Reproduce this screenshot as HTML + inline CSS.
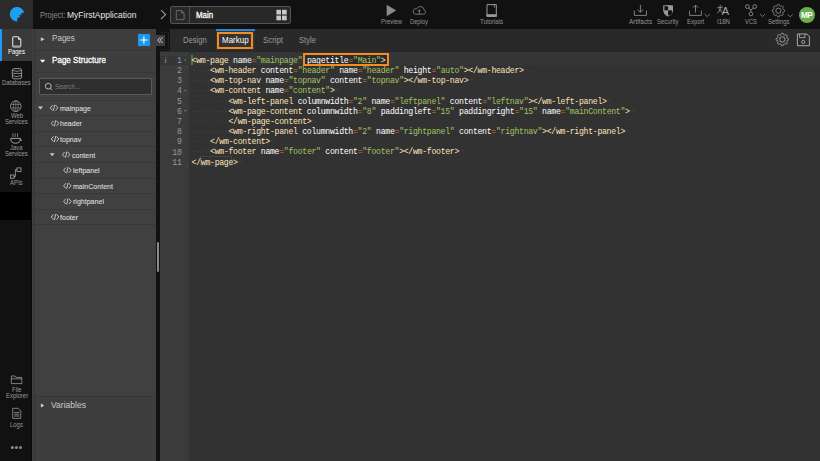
<!DOCTYPE html>
<html><head><meta charset="utf-8">
<style>
*{box-sizing:border-box}
html,body{margin:0;padding:0}
body{width:820px;height:461px;overflow:hidden;position:relative;background:#323232;font-family:"Liberation Sans",sans-serif}
.a{position:absolute}
.t{position:absolute;white-space:nowrap;line-height:1}
#code{position:absolute;left:191.6px;top:55.8px;font-family:"Liberation Mono",monospace;font-size:8.2px;letter-spacing:-0.303px;line-height:10.2px;color:#fff;white-space:pre}
#code div{height:10.2px}
.g{color:#FFE5BB}.s{color:#A5C261}.o{color:#CC7833}.i{color:#474747}.e{color:#424242}
#gut{position:absolute;left:160px;top:55.8px;width:21.6px;font-family:"Liberation Mono",monospace;font-size:8.2px;letter-spacing:-0.303px;line-height:10.2px;color:#999;text-align:right;white-space:pre}
.row{position:absolute;left:35px;width:121px;height:15.6px;border-top:1px solid #383838}
.tr{position:absolute;font-size:7.1px;color:#d2d2d2;line-height:1;white-space:nowrap}
.lbl{position:absolute;font-size:6.2px;color:#959595;line-height:1;white-space:nowrap}
.sl{position:absolute;font-size:6px;color:#9a9a9a;line-height:1.0;white-space:nowrap;text-align:center;width:33.4px;left:0}
</style></head><body>
<div class="a" style="left:0;top:0;width:820px;height:29px;background:#111"></div>
<div class="a" style="left:0;top:0;width:33px;height:29px;background:#2b2b2b"></div>
<div class="a" style="left:0;top:29px;width:31px;height:432px;background:#111"></div>
<div class="a" style="left:0;top:192px;width:31px;height:28px;background:#000"></div>
<div class="a" style="left:31px;top:29px;width:1px;height:432px;background:#0a0a0a"></div>
<div class="a" style="left:0;top:29px;width:33px;height:32px;background:#3a3a3a"></div>
<div class="a" style="left:0;top:29px;width:2px;height:32px;background:#1b9af7"></div>
<div class="a" style="left:32px;top:29px;width:124px;height:432px;background:#3e3e3e"></div>
<div class="a" style="left:34px;top:29px;width:1px;height:432px;background:#363636"></div>
<div class="a" style="left:35px;top:50px;width:121px;height:1px;background:#363636"></div>
<div class="a" style="left:35px;top:72px;width:121px;height:1px;background:#363636"></div>
<div class="a" style="left:35px;top:99px;width:121px;height:297px;background:#404040"></div>
<div class="a" style="left:35px;top:395.5px;width:121px;height:1px;background:#373737"></div>
<div class="a" style="left:35px;top:416.5px;width:121px;height:1px;background:#3a3a3a"></div>
<div class="a" style="left:137.6px;top:33.7px;width:12.4px;height:12.5px;background:#1d96ef"></div>
<div class="a" style="left:39.4px;top:78.2px;width:112.6px;height:16.6px;border:1px solid #5a5a5a;background:#2e2e2e;border-radius:1px"></div>
<div class="row" style="top:99.60px"></div><div class="row" style="top:115.20px"></div><div class="row" style="top:130.80px"></div><div class="row" style="top:146.40px"></div><div class="row" style="top:162.00px"></div><div class="row" style="top:177.60px"></div><div class="row" style="top:193.20px"></div><div class="row" style="top:208.80px"></div><div class="row" style="top:224.40px;height:1px"></div>
<div class="a" style="left:156px;top:29px;width:4px;height:432px;background:#121212"></div>
<div class="a" style="left:156.8px;top:241.7px;width:2.6px;height:30.6px;background:#8a8a8a;border-radius:1.3px"></div>
<div class="a" style="left:160px;top:29px;width:660px;height:22.5px;background:#292929"></div>
<div class="a" style="left:216px;top:29px;width:39px;height:21px;background:#333"></div>
<div class="a" style="left:216px;top:29px;width:39px;height:2px;background:#2b87d1"></div>
<div class="a" style="left:216.5px;top:31.9px;width:36.8px;height:17.2px;border:2.2px solid #f68b1f"></div>
<div class="a" style="left:156px;top:29px;width:14px;height:22px;background:#131313"></div>
<div class="a" style="left:160.5px;top:32px;width:8px;height:17.5px;border:1px dotted #272727;border-left:none"></div>
<div class="a" style="left:156px;top:35.1px;width:9px;height:10.7px;background:#3d3d3d"></div>
<div class="a" style="left:160px;top:51.5px;width:29px;height:410px;background:#3b3b3b"></div>
<div class="a" style="left:160px;top:55.5px;width:29px;height:9.4px;background:#353637"></div>
<div class="a" style="left:189px;top:51.5px;width:631px;height:13.5px;background:#353637"></div>
<div class="a" style="left:191px;top:54.8px;width:1.6px;height:9.8px;background:#4f7a2c"></div>
<div class="a" style="left:302.9px;top:53px;width:86.6px;height:13.1px;background:#2c2c2c"></div>
<div class="a" style="left:200.3px;top:156.3px;width:32px;height:10px;border:1px solid #424242"></div>
<div id="gut">1
2
3
4
5
6
7
8
9
10
11</div>
<div id="code"><div><span class="g">&lt;wm-page</span> name<span class="o">=</span><span class="s">"mainpage"</span> pagetitle<span class="o">=</span><span class="s">"Main"</span><span class="g">&gt;</span><span class="e">¬</span></div><div><span class="i">····</span><span class="g">&lt;wm-header</span> content<span class="o">=</span><span class="s">"header"</span> name<span class="o">=</span><span class="s">"header"</span> height<span class="o">=</span><span class="s">"auto"</span><span class="g">&gt;&lt;/wm-header&gt;</span><span class="e">¬</span></div><div><span class="i">····</span><span class="g">&lt;wm-top-nav</span> name<span class="o">=</span><span class="s">"topnav"</span> content<span class="o">=</span><span class="s">"topnav"</span><span class="g">&gt;&lt;/wm-top-nav&gt;</span><span class="e">¬</span></div><div><span class="i">····</span><span class="g">&lt;wm-content</span> name<span class="o">=</span><span class="s">"content"</span><span class="g">&gt;</span><span class="e">¬</span></div><div><span class="i">········</span><span class="g">&lt;wm-left-panel</span> columnwidth<span class="o">=</span><span class="s">"2"</span> name<span class="o">=</span><span class="s">"leftpanel"</span> content<span class="o">=</span><span class="s">"leftnav"</span><span class="g">&gt;&lt;/wm-left-panel&gt;</span><span class="e">¬</span></div><div><span class="i">········</span><span class="g">&lt;wm-page-content</span> columnwidth<span class="o">=</span><span class="s">"8"</span> paddingleft<span class="o">=</span><span class="s">"15"</span> paddingright<span class="o">=</span><span class="s">"15"</span> name<span class="o">=</span><span class="s">"mainContent"</span><span class="g">&gt;</span><span class="e">¬</span></div><div><span class="i">········</span><span class="g">&lt;/wm-page-content&gt;</span><span class="e">¬</span></div><div><span class="i">········</span><span class="g">&lt;wm-right-panel</span> columnwidth<span class="o">=</span><span class="s">"2"</span> name<span class="o">=</span><span class="s">"rightpanel"</span> content<span class="o">=</span><span class="s">"rightnav"</span><span class="g">&gt;&lt;/wm-right-panel&gt;</span><span class="e">¬</span></div><div><span class="i">····</span><span class="g">&lt;/wm-content&gt;</span><span class="e">¬</span></div><div><span class="i">····</span><span class="g">&lt;wm-footer</span> name<span class="o">=</span><span class="s">"footer"</span> content<span class="o">=</span><span class="s">"footer"</span><span class="g">&gt;&lt;/wm-footer&gt;</span><span class="e">¬</span></div><div><span class="g">&lt;/wm-page&gt;</span><span class="e">¬</span></div></div>
<div class="a" style="left:302.9px;top:53px;width:86.6px;height:13.1px;border:2.1px solid #f68b1f"></div>
<div class="a" style="left:170.2px;top:6px;width:120.8px;height:17.8px;border:1px solid #555;border-radius:2px;background:#282828"></div>
<div class="a" style="left:189.2px;top:6.5px;width:1px;height:17px;background:#505050"></div>
<div class="a" style="left:798.55px;top:6.7px;width:16.1px;height:16.1px;border-radius:50%;background:#6aae4c"></div>
<div class="t" style="left:800.9px;top:11.9px;font-size:8.2px;color:#fff;font-weight:bold;letter-spacing:-0.4px">MP</div>
<div class="t" style="left:40.00px;top:10.91px;font-size:8.53px;color:#8a8a8a;transform:scaleX(0.8850);transform-origin:0 0;">Project:</div>
<div class="t" style="left:66.70px;top:10.51px;font-size:9.01px;color:#e6e6e6;transform:scaleX(0.9434);transform-origin:0 0;">MyFirstApplication</div>
<div class="t" style="left:195.90px;top:10.79px;font-size:9.07px;color:#fff;transform:scaleX(0.8696);transform-origin:0 0;-webkit-text-stroke:0.30px #fff;">Main</div>
<div class="t" style="left:183.20px;top:36.05px;font-size:8.41px;color:#9a9a9a;transform:scaleX(0.9091);transform-origin:0 0;">Design</div>
<div class="t" style="left:221.60px;top:35.74px;font-size:8.77px;color:#fff;transform:scaleX(0.9091);transform-origin:0 0;">Markup</div>
<div class="t" style="left:263.20px;top:35.85px;font-size:8.65px;color:#9a9a9a;transform:scaleX(0.9091);transform-origin:0 0;">Script</div>
<div class="t" style="left:298.50px;top:36.05px;font-size:8.41px;color:#9a9a9a;transform:scaleX(0.9091);transform-origin:0 0;">Style</div>
<div class="t" style="left:51.60px;top:34.41px;font-size:9.05px;color:#c8c8c8;transform:scaleX(0.8929);transform-origin:0 0;">Pages</div>
<div class="t" style="left:51.90px;top:55.72px;font-size:9.15px;color:#fff;transform:scaleX(0.8850);transform-origin:0 0;-webkit-text-stroke:0.30px #fff;">Page Structure</div>
<div class="t" style="left:51.10px;top:400.02px;font-size:9.86px;color:#c8c8c8;transform:scaleX(0.8696);transform-origin:0 0;">Variables</div>
<div class="t" style="left:54.75px;top:83.74px;font-size:7.13px;color:#7a7a7a;transform:scaleX(0.8850);transform-origin:0 0;">Search...</div>
<div class="t" style="left:59.90px;top:104.83px;font-size:7.61px;color:#dadada;transform:scaleX(0.9259);transform-origin:0 0;-webkit-text-stroke:0.12px #dadada;">mainpage</div>
<div class="t" style="left:60.40px;top:120.43px;font-size:7.61px;color:#dadada;transform:scaleX(0.9259);transform-origin:0 0;-webkit-text-stroke:0.12px #dadada;">header</div>
<div class="t" style="left:60.40px;top:136.03px;font-size:7.61px;color:#dadada;transform:scaleX(0.9259);transform-origin:0 0;-webkit-text-stroke:0.12px #dadada;">topnav</div>
<div class="t" style="left:71.50px;top:151.63px;font-size:7.61px;color:#dadada;transform:scaleX(0.9259);transform-origin:0 0;-webkit-text-stroke:0.12px #dadada;">content</div>
<div class="t" style="left:72.60px;top:167.23px;font-size:7.61px;color:#dadada;transform:scaleX(0.9259);transform-origin:0 0;-webkit-text-stroke:0.12px #dadada;">leftpanel</div>
<div class="t" style="left:72.60px;top:182.83px;font-size:7.61px;color:#dadada;transform:scaleX(0.9259);transform-origin:0 0;-webkit-text-stroke:0.12px #dadada;">mainContent</div>
<div class="t" style="left:72.60px;top:198.43px;font-size:7.61px;color:#dadada;transform:scaleX(0.9259);transform-origin:0 0;-webkit-text-stroke:0.12px #dadada;">rightpanel</div>
<div class="t" style="left:60.40px;top:214.03px;font-size:7.61px;color:#dadada;transform:scaleX(0.9259);transform-origin:0 0;-webkit-text-stroke:0.12px #dadada;">footer</div>
<div class="t" style="left:380.90px;top:19.01px;font-size:6.70px;color:#959595;transform:scaleX(0.8850);transform-origin:0 0;">Preview</div>
<div class="t" style="left:410.00px;top:18.60px;font-size:6.53px;color:#959595;transform:scaleX(0.8850);transform-origin:0 0;">Deploy</div>
<div class="t" style="left:480.00px;top:18.83px;font-size:6.90px;color:#959595;transform:scaleX(0.8850);transform-origin:0 0;">Tutorials</div>
<div class="t" style="left:628.80px;top:18.01px;font-size:7.23px;color:#959595;transform:scaleX(0.8850);transform-origin:0 0;">Artifacts</div>
<div class="t" style="left:657.40px;top:19.01px;font-size:6.69px;color:#959595;transform:scaleX(0.8850);transform-origin:0 0;">Security</div>
<div class="t" style="left:687.00px;top:18.95px;font-size:6.76px;color:#959595;transform:scaleX(0.8850);transform-origin:0 0;">Export</div>
<div class="t" style="left:716.90px;top:18.19px;font-size:7.01px;color:#959595;transform:scaleX(0.8850);transform-origin:0 0;">I18N</div>
<div class="t" style="left:745.00px;top:18.54px;font-size:6.60px;color:#959595;transform:scaleX(0.8850);transform-origin:0 0;">VCS</div>
<div class="t" style="left:768.00px;top:18.98px;font-size:6.72px;color:#959595;transform:scaleX(0.8850);transform-origin:0 0;">Settings</div>
<div class="t" style="left:8.27px;top:48.89px;font-size:6.72px;color:#fff;transform:scaleX(0.8850);transform-origin:0 0;">Pages</div>
<div class="t" style="left:2.48px;top:80.29px;font-size:6.72px;color:#9a9a9a;transform:scaleX(0.8850);transform-origin:0 0;">Databases</div>
<div class="t" style="left:10.64px;top:112.79px;font-size:6.72px;color:#9a9a9a;transform:scaleX(0.8850);transform-origin:0 0;">Web</div>
<div class="t" style="left:5.29px;top:119.09px;font-size:6.72px;color:#9a9a9a;transform:scaleX(0.8850);transform-origin:0 0;">Services</div>
<div class="t" style="left:10.41px;top:144.79px;font-size:6.72px;color:#9a9a9a;transform:scaleX(0.8850);transform-origin:0 0;">Java</div>
<div class="t" style="left:5.29px;top:151.09px;font-size:6.72px;color:#9a9a9a;transform:scaleX(0.8850);transform-origin:0 0;">Services</div>
<div class="t" style="left:10.42px;top:180.09px;font-size:6.72px;color:#9a9a9a;transform:scaleX(0.8850);transform-origin:0 0;">APIs</div>
<div class="t" style="left:11.91px;top:386.69px;font-size:6.72px;color:#9a9a9a;transform:scaleX(0.8850);transform-origin:0 0;">File</div>
<div class="t" style="left:5.62px;top:392.69px;font-size:6.72px;color:#9a9a9a;transform:scaleX(0.8850);transform-origin:0 0;">Explorer</div>
<div class="t" style="left:10.25px;top:422.19px;font-size:6.72px;color:#9a9a9a;transform:scaleX(0.8850);transform-origin:0 0;">Logs</div>
<svg class="a" style="left:0;top:0" width="820" height="461" viewBox="0 0 820 461">
 <defs><clipPath id="sh"><path d="M663.2,5.6 Q668.1,4.2 673,5.6 V10 Q673,14.6 668.1,16.5 Q663.2,14.6 663.2,10 Z"/></clipPath></defs>
 <path d="M24.1,12.7 A7.25,7.25 0 1 0 17.2,21.4 L17.3,18 L20.2,16.9 L19,15.4 L22,14.5 L20.7,13.2 Z" fill="#1e9ef0"/>
 <!-- plus -->
 <path d="M143.9,36.4 V43.5 M140.2,40 H147.6" stroke="#fff" stroke-width="1.15"/>
 <!-- collapse << -->
 <path d="M160.2,37.4 L157.7,40.2 L160.2,43 M162.6,37.4 L160.1,40.2 L162.6,43" stroke="#d8d8d8" stroke-width="0.9" fill="none"/>
 <!-- panel triangles -->
 <path d="M40.8,37.3 L44.6,39.3 L40.8,41.3 Z" fill="#c8c8c8"/>
 <path d="M40,59.8 L45.2,59.8 L42.6,62.7 Z" fill="#fff"/>
 <path d="M40.9,403.4 L44.3,405.5 L40.9,407.6 Z" fill="#d0d0d0"/>
 <!-- search icon -->
 <circle cx="48.3" cy="86.2" r="2.9" stroke="#c8c8c8" stroke-width="0.9" fill="none"/>
 <path d="M50.4,88.3 L52.2,90" stroke="#c8c8c8" stroke-width="0.9"/>
 <path d="M52.50,105.20 L50.30,107.80 L52.50,110.40 M55.60,105.20 L57.80,107.80 L55.60,110.40 M54.70,104.80 L53.40,110.80" stroke="#d0d0d0" stroke-width="0.9" fill="none"/><path d="M38.00,106.40 L43.00,106.40 L40.50,109.40 Z" fill="#c8c8c8"/><path d="M53.50,120.80 L51.30,123.40 L53.50,126.00 M56.60,120.80 L58.80,123.40 L56.60,126.00 M55.70,120.40 L54.40,126.40" stroke="#d0d0d0" stroke-width="0.9" fill="none"/><path d="M53.50,136.40 L51.30,139.00 L53.50,141.60 M56.60,136.40 L58.80,139.00 L56.60,141.60 M55.70,136.00 L54.40,142.00" stroke="#d0d0d0" stroke-width="0.9" fill="none"/><path d="M64.60,152.00 L62.40,154.60 L64.60,157.20 M67.70,152.00 L69.90,154.60 L67.70,157.20 M66.80,151.60 L65.50,157.60" stroke="#d0d0d0" stroke-width="0.9" fill="none"/><path d="M49.70,153.20 L54.70,153.20 L52.20,156.20 Z" fill="#c8c8c8"/><path d="M65.80,167.60 L63.60,170.20 L65.80,172.80 M68.90,167.60 L71.10,170.20 L68.90,172.80 M68.00,167.20 L66.70,173.20" stroke="#d0d0d0" stroke-width="0.9" fill="none"/><path d="M65.80,183.20 L63.60,185.80 L65.80,188.40 M68.90,183.20 L71.10,185.80 L68.90,188.40 M68.00,182.80 L66.70,188.80" stroke="#d0d0d0" stroke-width="0.9" fill="none"/><path d="M65.80,198.80 L63.60,201.40 L65.80,204.00 M68.90,198.80 L71.10,201.40 L68.90,204.00 M68.00,198.40 L66.70,204.40" stroke="#d0d0d0" stroke-width="0.9" fill="none"/><path d="M53.50,214.40 L51.30,217.00 L53.50,219.60 M56.60,214.40 L58.80,217.00 L56.60,219.60 M55.70,214.00 L54.40,220.00" stroke="#d0d0d0" stroke-width="0.9" fill="none"/>
 <!-- chevron breadcrumb -->
 <path d="M161,10.2 L165.6,14.6 L161,19" stroke="#9a9a9a" stroke-width="1.1" fill="none"/>
 <!-- page file icon -->
 <path d="M176.3,10.6 H181.6 L184.1,13.1 V19.6 H176.3 Z M181.6,10.6 V13.1 H184.1" stroke="#777" stroke-width="0.8" fill="none"/>
 <!-- grid icon -->
 <rect x="276.4" y="9.8" width="4.6" height="4.7" fill="#c8c8c8"/><rect x="282" y="9.8" width="4.7" height="4.7" fill="#c8c8c8"/>
 <rect x="276.4" y="15.6" width="4.6" height="4.7" fill="#c8c8c8"/><rect x="282" y="15.6" width="4.7" height="4.7" fill="#c8c8c8"/>
 <!-- preview -->
 <path d="M386.7,4.8 L396.2,10.5 L386.7,16.2 Z" fill="#8a8a8a"/>
 <!-- deploy cloud -->
 <path d="M415.3,14.2 H423.2 A2.2,2.2 0 0 0 424.2,10 A3.9,3.9 0 0 0 416.8,8.7 A2.8,2.8 0 0 0 415.3,14.2 Z" stroke="#8a8a8a" stroke-width="0.8" fill="none"/>
 <path d="M419.3,14.1 V9.8 M417.8,11.3 L419.3,9.8 L420.8,11.3" stroke="#8a8a8a" stroke-width="0.8" fill="none"/>
 <!-- tutorials book -->
 <path d="M487,4.6 H496.3 V16.3 H487 Z" stroke="#9a9a9a" stroke-width="1" fill="none"/>
 <rect x="486.6" y="14.2" width="10.1" height="2.6" fill="#9a9a9a"/>
 <path d="M494.3,4.4 V7.5" stroke="#9a9a9a" stroke-width="0.9"/>
 <!-- artifacts -->
 <path d="M634.3,10.6 V15.4 H646.5 V10.6" stroke="#8a8a8a" stroke-width="0.9" fill="none"/>
 <path d="M640.4,4.9 V12.3 M637.7,9.6 L640.4,12.3 L643.1,9.6" stroke="#8a8a8a" stroke-width="0.9" fill="none"/>
 <!-- security shield -->
 <g clip-path="url(#sh)"><rect x="662" y="4" width="12" height="13" fill="#9a9a9a"/>
 <rect x="664.4" y="6.2" width="3.7" height="4.1" fill="#111"/><rect x="668.1" y="10.3" width="3.8" height="5.2" fill="#111"/></g>
 <path d="M664.5,10.3 Q664.5,13.8 668.1,15.4 V10.3 Z" fill="none"/>
 <!-- export -->
 <path d="M689.6,10.6 V15.4 H701.4 V10.6" stroke="#8a8a8a" stroke-width="0.9" fill="none"/>
 <path d="M695.5,12.6 V5.1 M692.8,7.8 L695.5,5.1 L698.2,7.8" stroke="#8a8a8a" stroke-width="0.9" fill="none"/>
 <path d="M704.5,14 L707.2,16.6 L709.9,14" stroke="#8a8a8a" stroke-width="0.8" fill="none"/>
 <!-- i18n glyph -->
 <path d="M717.4,7.7 H722.6 M720.1,5.2 V8.2 Q719.8,11.6 717.2,13.4 M720.3,9.2 Q721.1,11.8 722.6,13.2 M721.6,5.6 L722.4,6.4" stroke="#a8a8a8" stroke-width="0.8" fill="none"/>
 <text x="721.7" y="15.1" font-family="Liberation Sans" font-size="11" fill="#a8a8a8">A</text>
 <!-- vcs -->
 <circle cx="747.4" cy="6.6" r="1.9" stroke="#9a9a9a" stroke-width="0.8" fill="none"/>
 <circle cx="754.7" cy="6.6" r="1.9" stroke="#9a9a9a" stroke-width="0.8" fill="none"/>
 <circle cx="750.9" cy="13.9" r="1.9" stroke="#9a9a9a" stroke-width="0.8" fill="none"/>
 <path d="M748.5,8.2 L750.9,9.8 L753.6,8.2 M750.9,9.8 V12" stroke="#9a9a9a" stroke-width="0.8" fill="none"/>
 <path d="M760,14.2 L762.5,16.6 L765,14.2" stroke="#8a8a8a" stroke-width="0.8" fill="none"/>
 <!-- settings -->
 <path d="M782.93,12.58 L782.79,12.87 L782.70,13.18 L783.01,13.78 L783.27,14.43 L783.06,14.79 L782.78,15.08 L782.49,15.36 L782.13,15.57 L781.48,15.31 L780.88,15.00 L780.57,15.09 L780.28,15.23 L779.98,15.34 L779.69,15.50 L779.48,16.14 L779.20,16.78 L778.81,16.89 L778.40,16.90 L777.99,16.89 L777.60,16.78 L777.32,16.14 L777.11,15.50 L776.82,15.34 L776.52,15.23 L776.23,15.09 L775.92,15.00 L775.32,15.31 L774.67,15.57 L774.31,15.36 L774.02,15.08 L773.74,14.79 L773.53,14.43 L773.79,13.78 L774.10,13.18 L774.01,12.87 L773.87,12.58 L773.76,12.28 L773.60,11.99 L772.96,11.78 L772.32,11.50 L772.21,11.11 L772.20,10.70 L772.21,10.29 L772.32,9.90 L772.96,9.62 L773.60,9.41 L773.76,9.12 L773.87,8.82 L774.01,8.53 L774.10,8.22 L773.79,7.62 L773.53,6.97 L773.74,6.61 L774.02,6.32 L774.31,6.04 L774.67,5.83 L775.32,6.09 L775.92,6.40 L776.23,6.31 L776.52,6.17 L776.82,6.06 L777.11,5.90 L777.32,5.26 L777.60,4.62 L777.99,4.51 L778.40,4.50 L778.81,4.51 L779.20,4.62 L779.48,5.26 L779.69,5.90 L779.98,6.06 L780.28,6.17 L780.57,6.31 L780.88,6.40 L781.48,6.09 L782.13,5.83 L782.49,6.04 L782.78,6.32 L783.06,6.61 L783.27,6.97 L783.01,7.62 L782.70,8.22 L782.79,8.53 L782.93,8.82 L783.04,9.12 L783.20,9.41 L783.84,9.62 L784.48,9.90 L784.59,10.29 L784.60,10.70 L784.59,11.11 L784.48,11.50 L783.84,11.78 L783.20,11.99 L783.04,12.28Z" stroke="#9a9a9a" stroke-width="0.8" fill="none"/>
 <circle cx="778.4" cy="10.7" r="2.6" stroke="#9a9a9a" stroke-width="0.8" fill="none"/>
 <path d="M787.6,14.4 L790.2,16.8 L792.8,14.4" stroke="#8a8a8a" stroke-width="0.8" fill="none"/>
 <!-- tabbar gear + save -->
 <path d="M786.83,41.28 L786.69,41.57 L786.60,41.88 L786.91,42.48 L787.17,43.13 L786.96,43.49 L786.68,43.78 L786.39,44.06 L786.03,44.27 L785.38,44.01 L784.78,43.70 L784.47,43.79 L784.18,43.93 L783.88,44.04 L783.59,44.20 L783.38,44.84 L783.10,45.48 L782.71,45.59 L782.30,45.60 L781.89,45.59 L781.50,45.48 L781.22,44.84 L781.01,44.20 L780.72,44.04 L780.42,43.93 L780.13,43.79 L779.82,43.70 L779.22,44.01 L778.57,44.27 L778.21,44.06 L777.92,43.78 L777.64,43.49 L777.43,43.13 L777.69,42.48 L778.00,41.88 L777.91,41.57 L777.77,41.28 L777.66,40.98 L777.50,40.69 L776.86,40.48 L776.22,40.20 L776.11,39.81 L776.10,39.40 L776.11,38.99 L776.22,38.60 L776.86,38.32 L777.50,38.11 L777.66,37.82 L777.77,37.52 L777.91,37.23 L778.00,36.92 L777.69,36.32 L777.43,35.67 L777.64,35.31 L777.92,35.02 L778.21,34.74 L778.57,34.53 L779.22,34.79 L779.82,35.10 L780.13,35.01 L780.42,34.87 L780.72,34.76 L781.01,34.60 L781.22,33.96 L781.50,33.32 L781.89,33.21 L782.30,33.20 L782.71,33.21 L783.10,33.32 L783.38,33.96 L783.59,34.60 L783.88,34.76 L784.18,34.87 L784.47,35.01 L784.78,35.10 L785.38,34.79 L786.03,34.53 L786.39,34.74 L786.68,35.02 L786.96,35.31 L787.17,35.67 L786.91,36.32 L786.60,36.92 L786.69,37.23 L786.83,37.52 L786.94,37.82 L787.10,38.11 L787.74,38.32 L788.38,38.60 L788.49,38.99 L788.50,39.40 L788.49,39.81 L788.38,40.20 L787.74,40.48 L787.10,40.69 L786.94,40.98Z" stroke="#b8b8b8" stroke-width="0.8" fill="none"/>
 <circle cx="782.3" cy="39.4" r="2.7" stroke="#b8b8b8" stroke-width="0.8" fill="none"/>
 <path d="M797.4,34 H806.8 L809.4,36.6 V45.7 H797.4 Z" stroke="#b8b8b8" stroke-width="0.9" fill="none"/>
 <path d="M799.6,34 V37.6 H805 V34" stroke="#b8b8b8" stroke-width="0.8" fill="none"/>
 <circle cx="803.3" cy="42" r="1.6" stroke="#b8b8b8" stroke-width="0.8" fill="none"/>
 <!-- sidebar icons -->
 <path d="M13.7,36.7 H18 L20.8,39.5 V46.1 Q20.8,47 19.9,47 H13.6 Q12.7,47 12.7,46.1 V37.7 Q12.7,36.7 13.7,36.7 Z" stroke="#e4e4e4" stroke-width="1.05" fill="none"/>
 <path d="M17.8,37 L20.6,39.7 L18.2,39.7 Z" fill="#e4e4e4"/>
 <rect x="13" y="45.4" width="7.5" height="1.6" fill="#a0a0a0"/>
 <rect x="12.3" y="68.6" width="9.3" height="10.2" rx="1.8" stroke="#a0a0a0" stroke-width="0.9" fill="none"/>
 <path d="M12.3,70.4 Q16.95,72.4 21.6,70.4 M12.3,73.4 H21.6 M12.3,75.6 Q16.95,77.6 21.6,75.6" stroke="#a0a0a0" stroke-width="0.8" fill="none"/>
 <circle cx="15.8" cy="106.2" r="5.3" stroke="#9a9a9a" stroke-width="0.8" fill="none"/>
 <path d="M10.9,104.4 H20.7 M10.9,108 H20.7 M15.8,100.9 V111.5" stroke="#9a9a9a" stroke-width="0.6" fill="none"/>
 <ellipse cx="15.8" cy="106.2" rx="2.4" ry="5.3" stroke="#9a9a9a" stroke-width="0.6" fill="none"/>
 <path d="M12.9,133.2 V137 M15.2,133.2 V137 M17.5,133.2 V137" stroke="#9a9a9a" stroke-width="0.75" fill="none"/>
 <path d="M10.7,138.4 H20.3 Q20.3,143.2 15.5,143.2 Q10.7,143.2 10.7,138.4 Z M20.2,139 Q21.9,139.3 21,141" stroke="#a8a8a8" stroke-width="0.95" fill="none"/>
 <rect x="17" y="167.9" width="4" height="3.6" stroke="#a8a8a8" stroke-width="0.8" fill="none"/>
 <rect x="10.5" y="175" width="3.5" height="3.2" stroke="#a8a8a8" stroke-width="0.8" fill="none"/>
 <path d="M17,169.6 H15.4 V176.6 H14" stroke="#a8a8a8" stroke-width="0.8" fill="none"/>
 <path d="M11.3,376 H15 L16.2,377.4 H21.8 V383.6 H11.3 Z M11.3,378.8 H21.8" stroke="#9a9a9a" stroke-width="0.8" fill="none"/>
 <path d="M12.7,408.3 H18 L20.8,411.1 V418.4 H12.7 Z" stroke="#9a9a9a" stroke-width="0.8" fill="none"/>
 <path d="M14.2,412.4 H19.3 M14.2,414.2 H19.3 M14.2,416 H19.3" stroke="#9a9a9a" stroke-width="0.8" fill="none"/>
 <circle cx="12.3" cy="447.6" r="1.5" fill="#8a8a8a"/><circle cx="16.4" cy="447.6" r="1.5" fill="#8a8a8a"/><circle cx="20.5" cy="447.6" r="1.5" fill="#8a8a8a"/>
 <!-- gutter extras -->
 <text x="164.6" y="62.6" font-family="Liberation Serif" font-style="italic" font-size="7.5" fill="#aaa">i</text>
 <path d="M184,59.4 L186.6,59.4 L185.3,60.8 Z M184,89.9 L186.6,89.9 L185.3,91.3 Z M184,110.3 L186.6,110.3 L185.3,111.7 Z" fill="#888"/>
</svg>
</body></html>
